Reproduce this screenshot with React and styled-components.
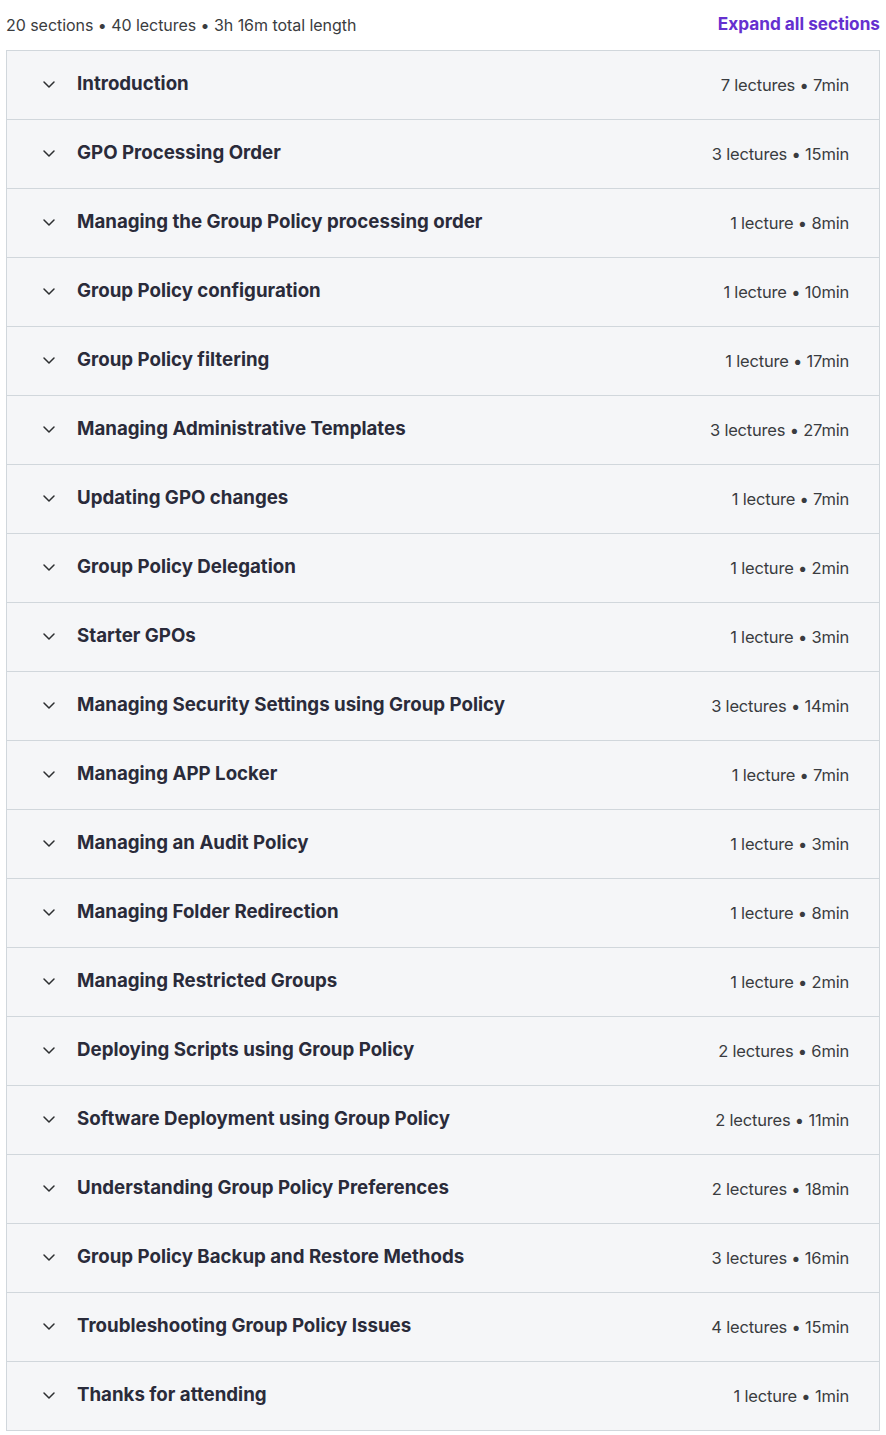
import React from "react";
import styled, { createGlobalStyle } from "styled-components";

const Global = createGlobalStyle`
  html, body { margin: 0; padding: 0; background: #ffffff; }
  body { font-family: Inter, "Noto Sans", Roboto, sans-serif; color: #2d2f31; }
`;

const sections = [
  ["Introduction", "7 lectures • 7min"],
  ["GPO Processing Order", "3 lectures • 15min"],
  ["Managing the Group Policy processing order", "1 lecture • 8min"],
  ["Group Policy configuration", "1 lecture • 10min"],
  ["Group Policy filtering", "1 lecture • 17min"],
  ["Managing Administrative Templates", "3 lectures • 27min"],
  ["Updating GPO changes", "1 lecture • 7min"],
  ["Group Policy Delegation", "1 lecture • 2min"],
  ["Starter GPOs", "1 lecture • 3min"],
  ["Managing Security Settings using Group Policy", "3 lectures • 14min"],
  ["Managing APP Locker", "1 lecture • 7min"],
  ["Managing an Audit Policy", "1 lecture • 3min"],
  ["Managing Folder Redirection", "1 lecture • 8min"],
  ["Managing Restricted Groups", "1 lecture • 2min"],
  ["Deploying Scripts using Group Policy", "2 lectures • 6min"],
  ["Software Deployment using Group Policy", "2 lectures • 11min"],
  ["Understanding Group Policy Preferences", "2 lectures • 18min"],
  ["Group Policy Backup and Restore Methods", "3 lectures • 16min"],
  ["Troubleshooting Group Policy Issues", "4 lectures • 15min"],
  ["Thanks for attending", "1 lecture • 1min"],
];

const Page = styled.div`
  width: 874px;
  padding: 0 6px 5px 6px;
`;

const Summary = styled.div`
  height: 50px;
  display: flex;
  align-items: center;
  justify-content: space-between;
  padding-bottom: 1px;
  box-sizing: border-box;
`;

const Stats = styled.span`
  font-size: 16px;
  color: #3a3c40;
  letter-spacing: -0.05px;
`;

const ExpandButton = styled.button`
  border: 0;
  background: none;
  padding: 0;
  font: inherit;
  font-size: 17.2px;
  font-weight: 700;
  color: #6530cf;
  cursor: pointer;
  margin-top: -3px;
`;

const Accordion = styled.div`
  border: 1px solid #d1d7dc;
  border-bottom: 0;
`;

const Row = styled.div`
  height: 68px;
  display: flex;
  align-items: center;
  background: #f5f6f8;
  border-bottom: 1px solid #d1d7dc;
  padding: 0 30px 0 30px;
`;

const Chevron = styled.span`
  width: 24px;
  height: 24px;
  display: flex;
  align-items: center;
  justify-content: center;
  margin-right: 16px;
  margin-top: -3px;
  color: #2d2f31;
`;

const Title = styled.span`
  flex: 1;
  font-size: 18.7px;
  font-weight: 650;
  color: #2a2b3a;
  margin-top: -4px;
`;

const Meta = styled.span`
  font-size: 16.5px;
  color: #3a3c40;
  letter-spacing: -0.2px;
`;

const ChevronIcon = () => (
  <svg width="14" height="14" viewBox="0 0 14 14" fill="none">
    <path d="M2 5l5 5 5-5" stroke="currentColor" strokeWidth="1.5" strokeLinecap="round" strokeLinejoin="round" />
  </svg>
);

export default function App() {
  return (
    <Page>
      <Global />
      <Summary>
        <Stats>20 sections • 40 lectures • 3h 16m total length</Stats>
        <ExpandButton>Expand all sections</ExpandButton>
      </Summary>
      <Accordion>
        {sections.map(([title, meta]) => (
          <Row key={title}>
            <Chevron>
              <ChevronIcon />
            </Chevron>
            <Title>{title}</Title>
            <Meta>{meta}</Meta>
          </Row>
        ))}
      </Accordion>
    </Page>
  );
}
